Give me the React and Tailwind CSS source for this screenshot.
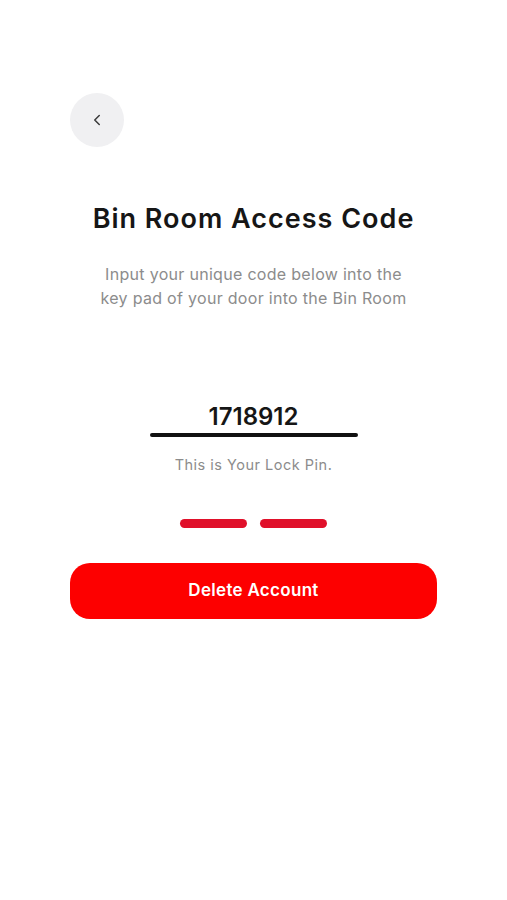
import { ChevronLeft } from "lucide-react";

export default function App() {
  return (
    <div
      className="min-h-[900px] w-[507px] bg-white"
      style={{ fontFamily: "Inter, 'Noto Sans', sans-serif" }}
    >
      <div className="px-[70px] pt-[93px]">
        <button className="flex h-[54px] w-[54px] items-center justify-center rounded-full bg-[#f0f0f2]">
          <ChevronLeft className="h-[18px] w-[18px] text-[#3a3a3a]" strokeWidth={2} />
        </button>
      </div>

      <h1 className="mt-[56px] text-center text-[27px] font-semibold leading-[32px] tracking-[1px] text-[#161616]">
        Bin Room Access Code
      </h1>
      <p className="mt-[27px] text-center text-[16px] leading-[24px] tracking-[0.3px] text-[#8c8c8c]">
        Input your unique code below into the
        <br />
        key pad of your door into the Bin Room
      </p>

      <div className="mt-[92px] flex flex-col items-center">
        <div className="text-[24px] font-semibold leading-[30px] text-[#161616]">1718912</div>
        <div className="mt-[1px] h-[4px] w-[208px] rounded-full bg-[#111]" />
        <div className="mt-[18px] text-[14.5px] leading-[20px] tracking-[0.5px] text-[#8c8c8c]">This is Your Lock Pin.</div>
        <div className="mt-[44px] flex gap-[13px]">
          <div className="h-[9px] w-[67px] rounded-full bg-[#e0102a]" />
          <div className="h-[9px] w-[67px] rounded-full bg-[#e0102a]" />
        </div>
      </div>

      <div className="mt-[35px] px-[70px]">
        <button className="flex h-[56px] w-full items-center justify-center rounded-[20px] bg-[#fd0000] text-[17px] font-semibold tracking-[0.3px] text-white">
          Delete Account
        </button>
      </div>
    </div>
  );
}
